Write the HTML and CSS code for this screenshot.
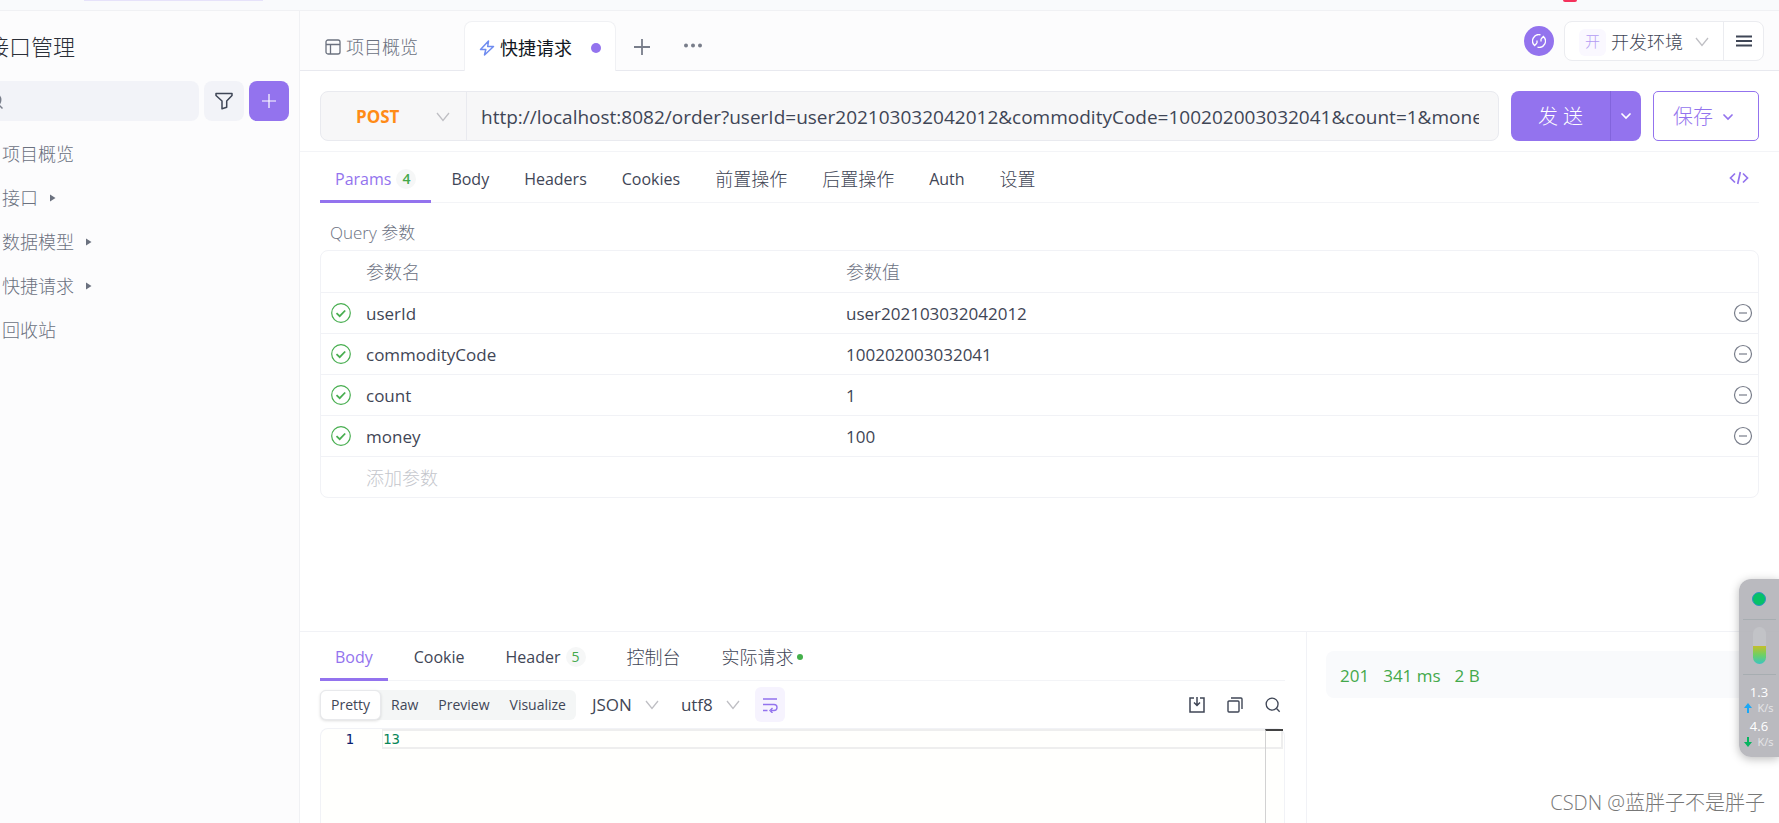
FILE: index.html
```html
<!DOCTYPE html>
<html lang="zh-CN">
<head>
<meta charset="utf-8">
<title>接口管理</title>
<link rel="stylesheet" href="styles.css">
</head>
<body>
<svg class="sprite" aria-hidden="true">
  <symbol id="chev" viewBox="0 0 14 10"><path d="M1 1l6 7.500 6-7.500" fill="none" stroke="currentColor" stroke-width="1.300"/></symbol>
  <symbol id="chev-bold" viewBox="0 0 10 7"><path d="M1 1l4 4 4-4" fill="none" stroke="currentColor" stroke-width="1.700" stroke-linecap="round"/></symbol>
  <symbol id="check" viewBox="0 0 20 20"><circle cx="10" cy="10" r="9.300" fill="none" stroke="currentColor" stroke-width="1.200"/><path d="M5.500 10.200l3.200 3 5.500-5.700" fill="none" stroke="currentColor" stroke-width="1.800"/></symbol>
  <symbol id="minus" viewBox="0 0 20 20"><circle cx="10" cy="10" r="8.500" fill="none" stroke="currentColor" stroke-width="1.200"/><path d="M6 10h8" stroke="currentColor" stroke-width="1.200"/></symbol>
  <symbol id="search" viewBox="0 0 18 18"><circle cx="8" cy="8" r="6.700" fill="none" stroke="currentColor" stroke-width="1.500"/><path d="M13 13l3.500 3.500" stroke="currentColor" stroke-width="1.500"/></symbol>
  <symbol id="tri" viewBox="0 0 6 8"><path d="M0 0.500l5.500 3.500L0 7.500z" fill="currentColor"/></symbol>
</svg>
<div class="app">
  <div class="topbar"><span class="topbar-search"></span><span class="topbar-badge"></span></div>
  <div class="shell">
    <aside class="sidebar">
      <h1 class="title">接口管理</h1>
      <div class="tools">
        <label class="search"><svg class="i18"><use href="#search"/></svg><input type="text" aria-label="搜索"></label>
        <button class="square" aria-label="筛选"><svg class="i20" viewBox="0 0 20 20"><path d="M2 2.500h16v2l-5.300 5.500v6.200l-4.700 1.500V10L2 4.500z" fill="none" stroke="currentColor" stroke-width="1.500" stroke-linejoin="round"/></svg></button>
        <button class="square primary" aria-label="新建"><svg class="i14" viewBox="0 0 14 14"><path d="M7 0v14M0 7h14" stroke="currentColor" stroke-width="1.200"/></svg></button>
      </div>
      <nav class="nav">
        <a href="#">项目概览</a>
        <a href="#">接口 <svg class="tri"><use href="#tri"/></svg></a>
        <a href="#">数据模型 <svg class="tri"><use href="#tri"/></svg></a>
        <a href="#">快捷请求 <svg class="tri"><use href="#tri"/></svg></a>
        <a href="#">回收站</a>
      </nav>
    </aside>
    <main class="main">
      <header class="tabs">
        <button class="tab"><svg class="i16" viewBox="0 0 16 16"><rect x="1" y="1" width="14" height="14" rx="2" fill="none" stroke="currentColor" stroke-width="1.300"/><path d="M1 5.500h14M5.500 5.500V15" stroke="currentColor" stroke-width="1.300"/></svg>项目概览</button>
        <button class="tab active"><svg class="i16 bolt" viewBox="0 0 16 16"><path d="M9.500 1L1.500 9.500h5.300L5.500 15l9-8.500H8.700z" fill="none" stroke="currentColor" stroke-width="1.500" stroke-linejoin="round"/></svg>快捷请求<span class="dirty"></span></button>
        <button class="tab-icon" aria-label="新标签"><svg class="i16" viewBox="0 0 16 16"><path d="M8 0v16M0 8h16" stroke="currentColor" stroke-width="1.800"/></svg></button>
        <button class="tab-icon more" aria-label="更多"><svg class="i18" viewBox="0 0 18 18"><g fill="currentColor"><circle cx="2" cy="7.500" r="2"/><circle cx="9" cy="7.500" r="2"/><circle cx="16" cy="7.500" r="2"/></g></svg></button>
        <div class="env">
          <button class="round" aria-label="代理"><svg class="i14" viewBox="0 0 14 14"><path d="M8.500 0.800A6.300 6.300 0 0 0 2.600 11.500L5 9M5.500 13.200A6.300 6.300 0 0 0 11.400 2.500L9 5M5 9V6.500M9 5v2.500" fill="none" stroke="currentColor" stroke-width="1.300"/></svg></button>
          <div class="env-group">
            <button class="env-select"><span class="env-tag">开</span>开发环境<svg class="chev"><use href="#chev"/></svg></button>
            <button class="env-menu" aria-label="环境管理"><svg class="i16" viewBox="0 0 16 16"><path d="M0 3.500h16M0 8h16M0 12.500h16" stroke="currentColor" stroke-width="1.800"/></svg></button>
          </div>
        </div>
      </header>
      <div class="request">
        <div class="url-box">
          <button class="method">POST<svg class="chev"><use href="#chev"/></svg></button>
          <input class="url" type="text" aria-label="URL" value="http://localhost:8082/order?userId=user202103032042012&amp;commodityCode=100202003032041&amp;count=1&amp;money=100">
        </div>
        <div class="send"><button class="send-main">发 送</button><button class="send-more" aria-label="更多发送选项"><svg class="chev-s"><use href="#chev-bold"/></svg></button></div>
        <button class="save">保存<svg class="chev-s"><use href="#chev-bold"/></svg></button>
      </div>
      <section class="params">
        <div class="subtabs">
          <button class="subtab on">Params<span class="badge strong">4</span></button>
          <button class="subtab">Body</button>
          <button class="subtab">Headers</button>
          <button class="subtab">Cookies</button>
          <button class="subtab zh">前置操作</button>
          <button class="subtab zh">后置操作</button>
          <button class="subtab">Auth</button>
          <button class="subtab zh">设置</button>
          <button class="code" aria-label="代码"><svg class="code-icon" viewBox="0 0 20 14"><path d="M6 2.500L1.500 7 6 11.500M14 2.500L18.500 7 14 11.500M11.300 1L8.700 13" fill="none" stroke="currentColor" stroke-width="1.700"/></svg></button>
        </div>
        <h2 class="caption">Query 参数</h2>
        <div class="table-frame">
        <table class="table">
          <colgroup><col class="c-check"><col class="c-name"><col><col class="c-del"></colgroup>
          <thead><tr><th></th><th>参数名</th><th>参数值</th><th></th></tr></thead>
          <tbody>
            <tr><td><svg class="ok"><use href="#check"/></svg></td><td>userId</td><td>user202103032042012</td><td><button class="del" aria-label="删除"><svg class="i20"><use href="#minus"/></svg></button></td></tr>
            <tr><td><svg class="ok"><use href="#check"/></svg></td><td>commodityCode</td><td>100202003032041</td><td><button class="del" aria-label="删除"><svg class="i20"><use href="#minus"/></svg></button></td></tr>
            <tr><td><svg class="ok"><use href="#check"/></svg></td><td>count</td><td>1</td><td><button class="del" aria-label="删除"><svg class="i20"><use href="#minus"/></svg></button></td></tr>
            <tr><td><svg class="ok"><use href="#check"/></svg></td><td>money</td><td>100</td><td><button class="del" aria-label="删除"><svg class="i20"><use href="#minus"/></svg></button></td></tr>
            <tr><td></td><td class="muted">添加参数</td><td></td><td></td></tr>
          </tbody>
        </table>
        </div>
      </section>
      <section class="response">
        <div class="result">
          <div class="subtabs small">
            <button class="subtab on">Body</button>
            <button class="subtab">Cookie</button>
            <button class="subtab">Header<span class="badge">5</span></button>
            <button class="subtab zh">控制台</button>
            <button class="subtab zh">实际请求<span class="live"></span></button>
          </div>
          <div class="viewbar">
            <div class="segment"><button class="seg on">Pretty</button><button class="seg">Raw</button><button class="seg">Preview</button><button class="seg">Visualize</button></div>
            <button class="pick">JSON<svg class="chev"><use href="#chev"/></svg></button>
            <button class="pick">utf8<svg class="chev"><use href="#chev"/></svg></button>
            <button class="wrap" aria-label="自动换行"><svg class="i16" viewBox="0 0 16 16"><path d="M1 2h14M1 7.500h11a3 3 0 0 1 0 6H9M1 13.500h4.500M10.500 11l-2.500 2.500 2.500 2.500" fill="none" stroke="currentColor" stroke-width="1.400"/></svg></button>
            <div class="actions">
              <button class="act" aria-label="下载"><svg class="i16" viewBox="0 0 16 16"><path d="M5 1H1v14h14V1h-4M8 0v8M5 5.500L8 8.500l3-3" fill="none" stroke="currentColor" stroke-width="1.500"/></svg></button>
              <button class="act" aria-label="复制"><svg class="i16" viewBox="0 0 16 16"><rect x="1" y="4" width="11" height="11" rx="1" fill="none" stroke="currentColor" stroke-width="1.400"/><path d="M4 1h10a1 1 0 0 1 1 1v10" fill="none" stroke="currentColor" stroke-width="1.400"/></svg></button>
              <button class="act" aria-label="查找"><svg class="i16"><use href="#search"/></svg></button>
            </div>
          </div>
          <div class="editor">
            <div class="gutter">1</div>
            <pre class="line">13</pre>
            <div class="ruler"></div>
          </div>
        </div>
        <div class="stats"><div class="stat-box"><span>201</span><span>341 ms</span><span>2 B</span></div></div>
      </section>
    </main>
  </div>
  <aside class="monitor">
    <span class="mon-dot"></span>
    <div class="mon-mid"><span class="gauge"></span></div>
    <div class="rate"><b>1.3</b><span><svg class="arrow up" viewBox="0 0 8 10"><path d="M4 0l4 5H5v5H3V5H0z" fill="currentColor"/></svg>K/s</span></div>
    <div class="rate"><b>4.6</b><span><svg class="arrow down" viewBox="0 0 8 10"><path d="M4 10l4-5H5V0H3v5H0z" fill="currentColor"/></svg>K/s</span></div>
  </aside>
  <div class="watermark">CSDN @蓝胖子不是胖子</div>
</div>
</body>
</html>
```
FILE: styles.css
```css
* { box-sizing: border-box; }
body { margin: 0; font-family: "Open Sans", "Noto Sans CJK SC", sans-serif; font-size: 17px; line-height: 24px; color: #3f4656; background: #fff; }
button { font: inherit; color: inherit; background: none; border: 0; padding: 0; margin: 0; display: flex; align-items: center; white-space: nowrap; flex: none; }
input { font: inherit; color: inherit; background: none; border: 0; padding: 0; min-width: 0; outline: 0; }
a { color: inherit; text-decoration: none; }
svg { display: block; flex: none; }
.sprite { position: absolute; width: 0; height: 0; }
.i14 { width: 14px; height: 14px; }
.i16 { width: 16px; height: 16px; }
.i18 { width: 18px; height: 18px; }
.i20 { width: 20px; height: 20px; }
.chev { width: 14px; height: 10px; color: #bfbfc4; }
.chev-s { width: 10px; height: 7px; }

.app { height: 100vh; display: flex; flex-direction: column; position: relative; overflow: hidden; }
.topbar { height: 11px; flex: none; display: flex; justify-content: space-between; background: #f9fafc; border-bottom: 1px solid #f0f1f4; padding: 0 202px 0 84px; }
.topbar-search { width: 179px; height: 1px; background: #e6e2fa; }
.topbar-badge { width: 14px; height: 2px; background: #f5325c; border-radius: 0 0 7px 7px; }
.shell { flex: 1; display: flex; min-height: 0; }

.sidebar { width: 300px; flex: none; background: #fcfcfd; border-right: 1px solid #f0f1f4; overflow: hidden; }
.title { margin: 19px 0 19px -13px; font-size: 22px; line-height: 32px; font-weight: 300; color: #2b2f38; white-space: nowrap; }
.tools { display: flex; gap: 5px; padding-right: 10px; }
.search { flex: 1; min-width: 0; height: 40px; margin-left: -20px; padding-left: 6px; display: flex; align-items: center; background: #f2f3f8; border-radius: 8px; color: #787d8a; }
.search input { flex: 1; }
.square { width: 40px; height: 40px; justify-content: center; background: #f2f3f8; border-radius: 8px; }
.primary { background: #9373ee; color: #fff; }
.nav { display: flex; flex-direction: column; padding: 11px 0 0 2px; font-size: 18px; }
.nav a { height: 44px; display: flex; align-items: center; gap: 12px; color: #6b717f; font-weight: 300; }
.tri { width: 6px; height: 8px; }

.main { flex: 1; min-width: 0; display: flex; flex-direction: column; }
.tabs { height: 60px; flex: none; display: flex; align-items: flex-end; background: #fcfcfd; box-shadow: inset 0 -1px #e8e9ef; }
.tab { height: 50px; padding: 2px 20px 0 25px; gap: 5px; color: #6b717f; width: 164px; font-size: 18px; font-weight: 300; }
.tab.active { width: 152px; padding: 2px 14px 0; background: #fff; color: #111722; border: 1px solid #f0f1f4; border-bottom: 0; border-radius: 8px 8px 0 0; font-weight: 400; }
.bolt { color: #6f8cf0; }
.dirty { width: 10px; height: 10px; border-radius: 50%; background: #9373ee; margin-left: auto; }
.tab-icon { height: 49px; margin-left: 18px; color: #787d8a; }
.more { margin-left: 34px; }
.env { margin-left: auto; align-self: flex-start; display: flex; align-items: center; gap: 10px; padding: 10px 15px 0 0; }
.round { width: 30px; height: 30px; border-radius: 50%; background: #9373ee; color: #fff; justify-content: center; }
.env-group { display: flex; height: 40px; border: 1px solid #ebecf0; border-radius: 8px; background: #fff; }
.env-select { width: 159px; padding: 2px 14px 0; font-size: 18px; font-weight: 300; border-right: 1px solid #ebecf0; gap: 5px; }
.env-select .chev { margin-left: auto; }
.env-tag { width: 27px; height: 27px; border-radius: 6px; background: #faf8ff; color: #b49cf3; text-align: center; font-size: 15px; }
.env-menu { width: 39px; justify-content: center; }

.request { flex: none; display: flex; gap: 12px; padding: 20px 20px 10px; border-bottom: 1px solid #f3f4f7; }
.url-box { flex: 1; min-width: 0; height: 50px; display: flex; background: #f7f7f8; border: 1px solid #e9eaef; border-radius: 8px; }
.method { width: 146px; padding: 2px 16px 0 35px; justify-content: space-between; color: #ff8b17; font-weight: 700; border-right: 1px solid #e9eaef; }
.url { flex: 1; margin: 2px 19px 0 14px; font-size: 19px; }
.send { display: flex; height: 50px; background: #9373ee; color: #fff; border-radius: 8px; font-size: 20px; }
.send-main { width: 100px; padding-top: 2px; justify-content: center; border-right: 1px solid #8264dc; font-weight: 300; }
.send-more { width: 30px; justify-content: center; }
.save { width: 106px; height: 50px; padding: 2px 6px 0 0; justify-content: center; gap: 10px; border: 1px solid #9373ee; border-radius: 5px; color: #9373ee; font-size: 20px; font-weight: 300; }

.params { flex: 1; padding: 0 20px; }
.subtabs { display: flex; height: 51px; box-shadow: inset 0 -1px #f3f4f7; gap: 5px; }
.subtab { padding: 2px 15px 0; gap: 5px; font-size: 16px; }
.subtab.zh { font-size: 18px; font-weight: 300; }
.subtab.on { color: #9373ee; box-shadow: inset 0 -3px #9373ee; }
.badge { width: 20px; height: 20px; line-height: 20px; border-radius: 50%; background: #f6f7f7; color: #44a94b; font-size: 14px; text-align: center; }
.strong { font-weight: 600; }
.live { width: 6px; height: 6px; border-radius: 50%; background: #44b04b; }
.subtab.zh:last-child { gap: 3px; }
.code { margin-left: auto; padding: 0 10px; color: #9373ee; }
.code-icon { width: 20px; height: 14px; }
.caption { margin: 18px 0 5px 10px; font-size: 17px; line-height: 24px; font-weight: 300; color: #6b717f; }
.table-frame { border: 1px solid #f1f2f6; border-radius: 8px; }
.table { width: 100%; border-collapse: collapse; table-layout: fixed; }
.table th, .table td { height: 41px; padding: 2px 0 0; text-align: left; font-weight: 400; }
.table td:first-child, .table td:last-child { padding: 0; }
.table th { color: #6b717f; font-size: 18px; font-weight: 300; }
.table tbody tr { border-top: 1px solid #f1f2f6; }
.c-check { width: 45px; }
.c-name { width: 480px; }
.c-del { width: 25px; }
.ok { width: 20px; height: 20px; margin-left: 10px; color: #48ae50; }
.del { color: #787d8a; }
.table .muted { color: #c4c6cc; font-size: 18px; font-weight: 300; }

.response { height: 192px; flex: none; display: flex; border-top: 1px solid #f1f2f6; }
.result { flex: 1; min-width: 0; padding: 0 21px 0 20px; display: flex; flex-direction: column; border-right: 1px solid #f1f2f6; }
.small { height: 49px; flex: none; gap: 11px; }
.small .subtab { padding-top: 0; }
.viewbar { display: flex; align-items: center; height: 47px; flex: none; }
.segment { display: flex; height: 30px; background: #f4f6f6; border-radius: 6px; font-size: 14px; }
.seg { padding: 0 10px; }
.seg.on { background: #fff; border: 1px solid #e8e9ec; border-radius: 6px; box-shadow: 0 1px 3px #0002; }
.pick { gap: 13px; margin-left: 16px; }
.pick + .pick { margin-left: 22px; }
.wrap { width: 30px; height: 35px; margin-left: 15px; justify-content: center; background: #f6f3fe; color: #9373ee; border-radius: 6px; }
.actions { margin-left: auto; display: flex; gap: 22px; padding-right: 4px; }
.editor { flex: 1; display: flex; position: relative; border: 1px solid #f1f2f6; border-bottom: 0; border-radius: 8px 8px 0 0; background: #fffffd; }
.gutter { width: 61px; padding: 2px 28px 0 0; text-align: right; color: #0b216f; font: 14px/17px "DejaVu Sans Mono", monospace; }
.line { flex: 1; height: 20px; margin: 0 1px 0 0; border: 2px solid #eee; border-left-width: 1px; color: #098658; font: 14px/17px "DejaVu Sans Mono", monospace; }
.ruler { position: absolute; right: 1px; top: 0; bottom: 0; width: 18px; border-left: 1px solid #d2d2d2; border-top: 2px solid #424242; }
.stats { width: 472px; flex: none; padding: 19px 0 0 19px; }
.stat-box { height: 47px; display: flex; align-items: center; gap: 14px; padding: 2px 0 0 14px; border-radius: 8px 0 0 8px; background: #f9fafc; color: #44a94b; }

.monitor { position: absolute; right: 0; bottom: 66px; width: 40px; height: 178px; display: flex; flex-direction: column; align-items: center; padding-top: 13px; border-radius: 12px 0 0 12px; background: #b0b1b6e0; box-shadow: 0 2px 10px #0004; color: #fff; }
.mon-dot { width: 14px; height: 14px; border-radius: 50%; background: #06c167; border: 1px solid #2d93c4; }
.mon-mid { margin: 13px 0 8px; width: 33px; height: 56px; padding-top: 7px; border: 1px solid #a7adb1; border-width: 1px 0; display: flex; justify-content: center; }
.gauge { width: 13px; height: 37px; border-radius: 7px; background: linear-gradient(#c2c3c7 50%, #c9bd27 50%, #6fd063 75%, #3bc5c0); }
.rate { height: 34px; text-align: center; }
.rate b { display: block; font-size: 13px; font-weight: 400; line-height: 18px; }
.rate span { display: flex; align-items: center; gap: 5px; font-size: 11px; line-height: 14px; color: #e6e6e8; }
.arrow { width: 8px; height: 10px; }
.up { color: #1ba8f5; }
.down { color: #06b45f; }
.watermark { position: absolute; right: 14px; bottom: 6px; font-size: 20px; line-height: 28px; font-weight: 300; color: #777; }
```
